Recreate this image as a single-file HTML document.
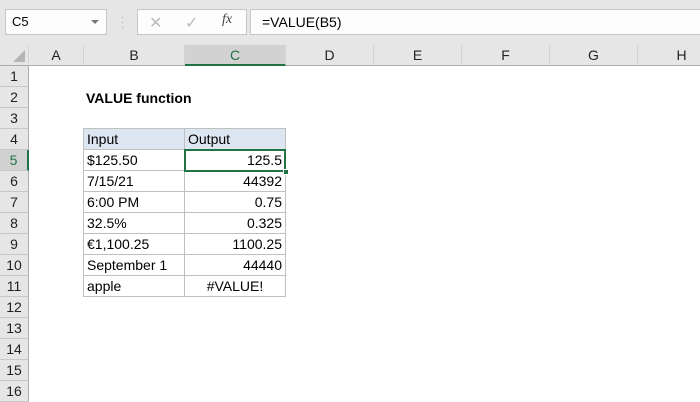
<!DOCTYPE html>
<html><head><style>
*{margin:0;padding:0;box-sizing:border-box}
body{width:700px;height:400px;overflow:hidden;background:#fff;font-family:"Liberation Sans",sans-serif;position:relative;font-size:13px;color:#000}
.a{position:absolute}
.tb{left:0;top:0;width:700px;height:45px;background:#e6e6e6}
.box{background:#fdfdfd;border:1px solid #c6c6c6}
.ch{top:45px;height:21px;background:#e6e6e6;border-bottom:1px solid #ababab;border-right:1px solid #d4d4d4;text-align:center;line-height:21px;font-size:14px;color:#222}
.rh{left:0;width:29px;height:21px;background:#e6e6e6;border-bottom:1px solid #c8c8c8;border-right:1px solid #ababab;text-align:center;line-height:21px;font-size:14px;color:#222}
.c{height:22px;border:1px solid #c0c0c0;line-height:20px;padding:0 3px;font-size:14px}
.r{text-align:right}
</style></head><body>
<div class="a tb"></div>
<div class="a box" style="left:5px;top:9px;width:102px;height:26px;line-height:24px;padding-left:6px;font-size:13px">C5</div>
<div class="a" style="left:91px;top:20px;width:0;height:0;border-left:4px solid transparent;border-right:4px solid transparent;border-top:4px solid #777"></div>
<div class="a" style="left:121px;top:15px;color:#aaa;font-size:10px;line-height:5px">·<br>·<br>·</div>
<div class="a box" style="left:137px;top:9px;width:110px;height:26px"></div>
<div class="a" style="left:149px;top:13px;color:#bbb;font-size:16px">✕</div>
<div class="a" style="left:185px;top:13px;color:#bbb;font-size:16px">✓</div>
<div class="a" style="left:222px;top:12px;color:#444;font-size:14px;font-style:italic;font-family:'Liberation Serif',serif">fx</div>
<div class="a box" style="left:250px;top:9px;width:460px;height:26px;line-height:24px;padding-left:11px;font-size:14px">=VALUE(B5)</div>
<div class="a ch" style="left:0;width:29px"><div style="position:absolute;right:3px;bottom:3px;width:0;height:0;border-left:12px solid transparent;border-bottom:12px solid #b5b5b5"></div></div>
<div class="a ch" style="left:29px;width:55px">A</div>
<div class="a ch" style="left:84px;width:101px">B</div>
<div class="a ch" style="left:185px;width:101px;background:#d2d2d2;border-bottom:2px solid #217346;color:#217346">C</div>
<div class="a ch" style="left:286px;width:88px">D</div>
<div class="a ch" style="left:374px;width:88px">E</div>
<div class="a ch" style="left:462px;width:88px">F</div>
<div class="a ch" style="left:550px;width:88px">G</div>
<div class="a ch" style="left:638px;width:88px">H</div>
<div class="a rh" style="top:66px">1</div>
<div class="a rh" style="top:87px">2</div>
<div class="a rh" style="top:108px">3</div>
<div class="a rh" style="top:129px">4</div>
<div class="a rh" style="top:150px;background:#d2d2d2;border-right:2px solid #217346;color:#217346">5</div>
<div class="a rh" style="top:171px">6</div>
<div class="a rh" style="top:192px">7</div>
<div class="a rh" style="top:213px">8</div>
<div class="a rh" style="top:234px">9</div>
<div class="a rh" style="top:255px">10</div>
<div class="a rh" style="top:276px">11</div>
<div class="a rh" style="top:297px">12</div>
<div class="a rh" style="top:318px">13</div>
<div class="a rh" style="top:339px">14</div>
<div class="a rh" style="top:360px">15</div>
<div class="a rh" style="top:381px">16</div>
<div class="a" style="left:86px;top:88px;font-weight:bold;font-size:14px;line-height:21px">VALUE function</div>
<div class="a c" style="left:83px;top:128px;width:102px;background:#dce6f1">Input</div>
<div class="a c" style="left:184px;top:128px;width:102px;background:#dce6f1">Output</div>
<div class="a c" style="left:83px;top:149px;width:102px">$125.50</div>
<div class="a c" style="left:83px;top:170px;width:102px">7/15/21</div>
<div class="a c r" style="left:184px;top:170px;width:102px">44392</div>
<div class="a c" style="left:83px;top:191px;width:102px">6:00 PM</div>
<div class="a c r" style="left:184px;top:191px;width:102px">0.75</div>
<div class="a c" style="left:83px;top:212px;width:102px">32.5%</div>
<div class="a c r" style="left:184px;top:212px;width:102px">0.325</div>
<div class="a c" style="left:83px;top:233px;width:102px">€1,100.25</div>
<div class="a c r" style="left:184px;top:233px;width:102px">1100.25</div>
<div class="a c" style="left:83px;top:254px;width:102px">September 1</div>
<div class="a c r" style="left:184px;top:254px;width:102px">44440</div>
<div class="a c" style="left:83px;top:275px;width:102px">apple</div>
<div class="a c" style="left:184px;top:275px;width:102px;text-align:center">#VALUE!</div>
<div class="a c r" style="left:184px;top:149px;width:102px;height:23px;border:2px solid #217346;line-height:19px;padding-right:2px">125.5</div>
<div class="a" style="left:283px;top:169px;width:6px;height:6px;background:#217346;border:1px solid #fff"></div>
</body></html>
